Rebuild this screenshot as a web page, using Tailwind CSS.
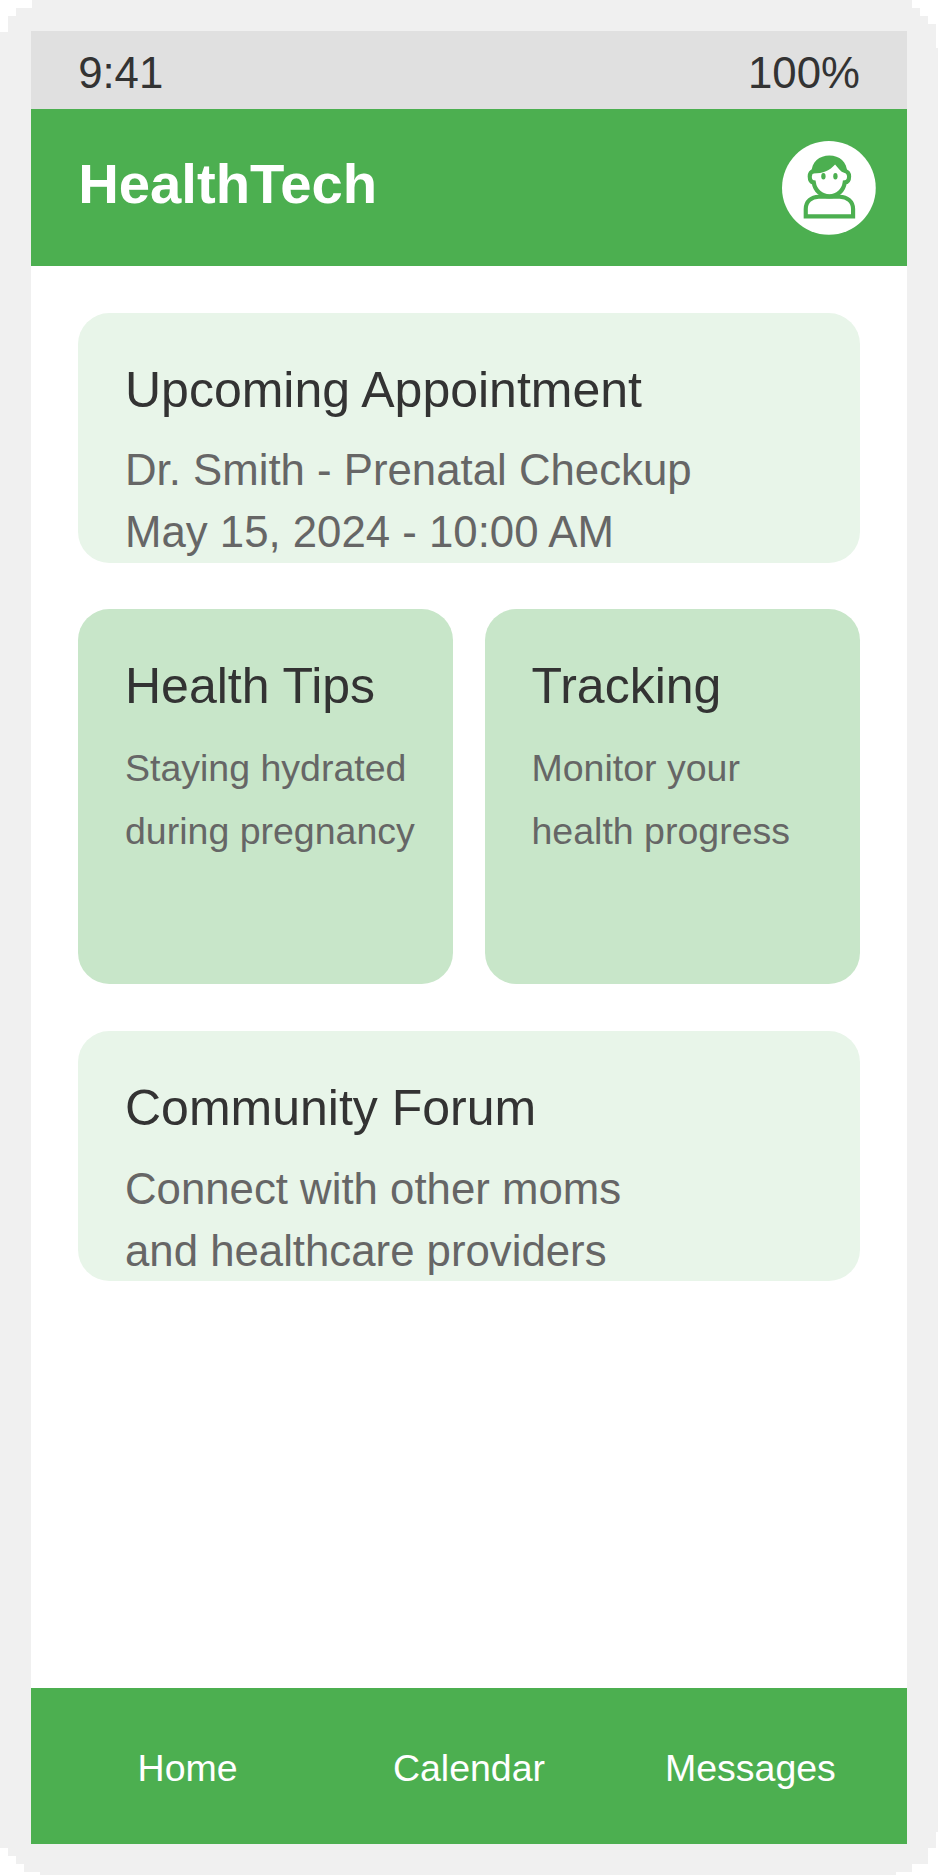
<!DOCTYPE html>
<html lang="en">
<head>
<meta charset="utf-8">
<title>HealthTech</title>
<script src="https://cdn.jsdelivr.net/npm/@tailwindcss/browser@4"></script>
</head>
<body class="bg-white font-['Liberation_Sans',Arial,sans-serif]">
<div class="w-[938px] h-[1875px] bg-[#f0f0f0] p-[31.25px] flex flex-col overflow-hidden [clip-path:polygon(32px_0,912px_0,912px_8px,920px_8px,920px_16px,928px_16px,928px_24px,936px_24px,936px_48px,938px_48px,938px_1832px,936px_1832px,936px_1848px,928px_1848px,928px_1864px,912px_1864px,912px_1872px,896px_1872px,896px_1875px,40px_1875px,40px_1872px,24px_1872px,24px_1864px,16px_1864px,16px_1856px,8px_1856px,8px_1848px,0_1848px,0_32px,8px_32px,8px_16px,16px_16px,16px_8px,32px_8px)]">
  <div class="h-[78.125px] shrink-0 bg-[#e0e0e0] px-[46.875px] flex justify-between text-[43.75px] leading-[83.5px] text-[#333]">
    <span>9:41</span><span>100%</span>
  </div>
  <header class="h-[156.25px] shrink-0 bg-[#4caf50] pl-[46.875px] pr-[31.25px] flex justify-between">
    <h1 class="text-[56.25px] leading-[150px] font-bold text-white">HealthTech</h1>
    <svg class="size-[93.75px] self-center overflow-visible" viewBox="33.75 31.875 281.25 281.25" fill="none" stroke="#4caf50" stroke-width="12.500">
      <circle cx="174.4" cy="172.5" r="140.6" fill="#fff" stroke="none"/>
      <path d="M129 121Q117 125 117 138Q117 155 129 156C132 180 152 198 176 198C200 198 219 180 222 156Q235 155 235 138Q235 125 222 121"/>
      <path d="M122 128C122 94 146 75 176 75C206 75 229 94 230 128L220 127C210 124 203 114 193 102C177 120 158 129 127 129Z" fill="#4caf50" stroke="none"/>
      <ellipse cx="158" cy="137.500" rx="6.500" ry="10" fill="#4caf50" stroke="none"/>
      <ellipse cx="194" cy="137.500" rx="6.500" ry="10" fill="#4caf50" stroke="none"/>
      <path d="M105 258V236C105 213 122 199 144 199H207C229 199 247 213 247 236V258Z"/>
    </svg>
  </header>
  <main class="grow bg-white px-[46.875px] pt-[46.875px] flex flex-col gap-[46.875px] text-[#666]">
    <section class="h-[250px] shrink-0 rounded-[31.25px] bg-[#e8f5e9] px-[46.875px] pt-[46.1px]">
      <h2 class="text-[50px] leading-[62.5px] text-[#333]">Upcoming Appointment</h2>
      <p class="mt-[17.8px] text-[43.75px] leading-[62.5px]">Dr. Smith - Prenatal Checkup<br>May 15, 2024 - 10:00 AM</p>
    </section>
    <div class="grid grid-cols-2 gap-[31.25px] shrink-0">
      <section class="h-[375px] rounded-[31.25px] bg-[#c8e6c9] pl-[46.875px] pt-[45.9px]">
        <h2 class="text-[50px] leading-[62.5px] text-[#333]">Health Tips</h2>
        <p class="mt-[19.7px] text-[37.5px] leading-[62.5px] whitespace-nowrap">Staying hydrated<br>during pregnancy</p>
      </section>
      <section class="h-[375px] rounded-[31.25px] bg-[#c8e6c9] pl-[46.875px] pt-[45.9px]">
        <h2 class="text-[50px] leading-[62.5px] text-[#333]">Tracking</h2>
        <p class="mt-[19.7px] text-[37.5px] leading-[62.5px] whitespace-nowrap">Monitor your<br>health progress</p>
      </section>
    </div>
    <section class="h-[250px] shrink-0 rounded-[31.25px] bg-[#e8f5e9] px-[46.875px] pt-[46.1px]">
      <h2 class="text-[50px] leading-[62.5px] text-[#333]">Community Forum</h2>
      <p class="mt-[17.8px] text-[43.75px] leading-[62.5px]">Connect with other moms<br>and healthcare providers</p>
    </section>
  </main>
  <nav class="h-[156.25px] shrink-0 bg-[#4caf50] px-[15.625px] grid grid-cols-3 text-center text-[37.5px] leading-[161.5px] text-white">
    <a>Home</a><a>Calendar</a><a>Messages</a>
  </nav>
</div>
</body>
</html>
